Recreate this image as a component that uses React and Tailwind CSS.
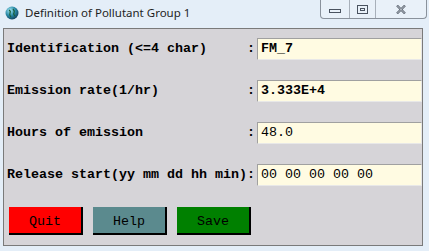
import React from "react";

const rows = [
	{ label: "Identification (<=4 char)", value: "FM_7", bold: true },
	{ label: "Emission rate(1/hr)", value: "3.333E+4", bold: true },
	{ label: "Hours of emission", value: "48.0", bold: false },
	{ label: "Release start(yy mm dd hh min)", value: "00 00 00 00 00", bold: false },
];

const buttons = [
	{ text: "Quit", cls: "bg-[#ff0000]" },
	{ text: "Help", cls: "bg-[#5b8a8e]" },
	{ text: "Save", cls: "bg-[#008000]" },
];

const Globe = () => (
	<svg width="14" height="14" viewBox="0 0 14 14">
		<defs>
			<radialGradient id="g" cx="0.35" cy="0.3" r="0.8">
				<stop offset="0" stopColor="#9fe3f0" />
				<stop offset="0.5" stopColor="#2a8aa6" />
				<stop offset="1" stopColor="#0d3550" />
			</radialGradient>
		</defs>
		<circle cx="7" cy="7" r="6.5" fill="url(#g)" />
		<path d="M4 4 Q6 5 5 7 Q4 9 6 11 M8 3 Q10 5 9 7 Q8 8 10 10" stroke="#1b5e3a" strokeWidth="1.2" fill="none" />
	</svg>
);

const App = () => {
	return (
		<div className="w-[429px] h-[251px] bg-[#e4eef8] relative overflow-hidden" style={{ fontFamily: "'Liberation Mono', monospace" }}>
			{/* title bar */}
			<div className="h-[28px] flex items-center pl-[5px] pb-[2px]">
				<Globe />
				<span className="ml-[6px] text-[11.5px] text-[#1e1e1e] leading-none" style={{ fontFamily: "'Noto Sans', sans-serif" }}>
					Definition of Pollutant Group 1
				</span>
			</div>
			<div className="absolute top-0 left-[320px] w-[107px] h-[19px] flex border border-t-0 border-[#8a929c] rounded-b-[4px] bg-[#e9f1f9]">
				<div className="w-[29px] flex items-center justify-center border-r border-[#a8b0ba]">
					<div className="w-[12px] h-[4px] border border-[#4a5360] mt-[4px]" />
				</div>
				<div className="w-[26px] flex items-center justify-center border-r border-[#a8b0ba]">
					<div className="w-[11px] h-[9px] border border-[#4a5360] flex items-center justify-center">
						<div className="w-[5px] h-[3px] border border-[#4a5360]" />
					</div>
				</div>
				<div className="flex-1 flex items-center justify-center">
					<svg width="10" height="9" viewBox="0 0 10 9">
						<path d="M1 0.5 L9 8.5 M9 0.5 L1 8.5" stroke="#4a5360" strokeWidth="2.2" />
						<path d="M1 0.5 L9 8.5 M9 0.5 L1 8.5" stroke="#eef3f8" strokeWidth="0.8" />
					</svg>
				</div>
			</div>

			{/* client area */}
			<div className="ml-[3px] w-[420px] h-[218px] border border-[#7a7a7a] bg-[#d6d4d8] pt-[9px] pl-[3px]">
				<div className="flex flex-col gap-5">
					{rows.map((r) => (
						<div key={r.label} className="flex items-center h-[22px] text-[13.33px] text-black">
							<span className="w-[30ch] font-bold whitespace-pre">{r.label}</span>
							<span className="font-bold w-[10px]">:</span>
							<div className={`flex-1 h-[22px] bg-[#fffbe2] border border-t-[#a0a0a0] border-l-[#a0a0a0] border-b-[#e8e8e8] border-r-[#e8e8e8] pl-[3px] flex items-center ${r.bold ? "font-bold" : "font-normal"}`}>
								{r.value}
							</div>
						</div>
					))}
				</div>
				<div className="flex gap-[10px] mt-[21px] ml-[2px]">
					{buttons.map((b) => (
						<div
							key={b.text}
							className={`w-[74px] h-[28px] ${b.cls} border-2 border-t-0 border-l-0 border-black flex items-center justify-center text-[13.33px] text-black pt-[3px]`}
						>
							{b.text}
						</div>
					))}
				</div>
			</div>
		</div>
	);
};

export default App;
